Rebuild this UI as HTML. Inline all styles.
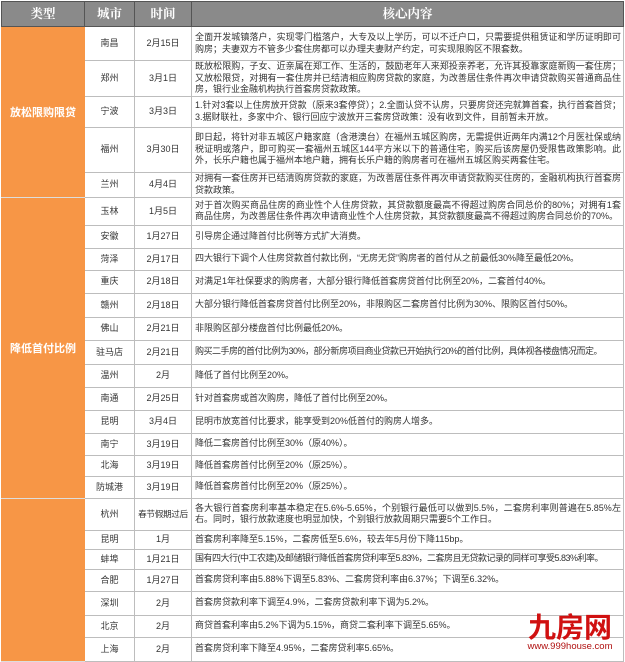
<!DOCTYPE html>
<html><head><meta charset="utf-8">
<style>
html,body{margin:0;padding:0;background:#fff;width:625px;height:662px;overflow:hidden}
table{position:absolute;left:1px;top:1px;border-collapse:collapse;table-layout:fixed;width:623px;font-family:"Liberation Sans","Noto Sans CJK SC",sans-serif;font-size:9px;color:#333}
td,th{border:1px solid #bdbdbd;padding:0;vertical-align:middle;overflow:hidden}
th{background:#8a8a8a;color:#fff;font-family:"Liberation Serif","Noto Serif CJK SC",serif;font-size:12.5px;font-weight:bold;border:1px solid #555;height:24px;line-height:14px}
td.t{background:#f79646;color:#fff;font-weight:bold;font-size:11px;text-align:center;border-color:#f79646;border-bottom:1px solid #ddd}
td.c{text-align:center;line-height:11px}
td.x{padding:0 2px 0 3px;line-height:11.5px;text-align:justify;word-break:break-all}
.logo{position:absolute;left:518px;top:611px;width:104px;text-align:center;color:#d01010}
.logo .b{font-family:"Noto Sans CJK SC",sans-serif;font-size:28px;line-height:30px;font-weight:bold}
.logo .s{font-family:"Liberation Sans",sans-serif;font-size:9.5px;line-height:11px;color:#b01010}
</style></head><body>
<table>
<colgroup><col style="width:83px"><col style="width:50px"><col style="width:57px"><col></colgroup>
<tr><th>类型</th><th>城市</th><th>时间</th><th>核心内容</th></tr>
<tr style="height:34px"><td class="t" rowspan="5">放松限购限贷</td><td class="c">南昌</td><td class="c">2月15日</td><td class="x">全面开发城镇落户，实现零门槛落户，大专及以上学历，可以不迁户口，只需要提供租赁证和学历证明即可购房；夫妻双方不管多少套住房都可以办理夫妻财产约定，可实现限购区不限套数。</td></tr>
<tr style="height:35px"><td class="c">郑州</td><td class="c">3月1日</td><td class="x">既放松限购，子女、近亲属在郑工作、生活的，鼓励老年人来郑投亲养老，允许其投靠家庭新购一套住房；又放松限贷，对拥有一套住房并已结清相应购房贷款的家庭，为改善居住条件再次申请贷款购买普通商品住房，银行业金融机构执行首套房贷款政策。</td></tr>
<tr style="height:31px"><td class="c">宁波</td><td class="c">3月3日</td><td class="x">1.针对3套以上住房放开贷款（原来3套停贷）；2.全面认贷不认房，只要房贷还完就算首套，执行首套首贷；3.据财联社，多家中介、银行回应宁波放开三套房贷政策：没有收到文件，目前暂未开放。</td></tr>
<tr style="height:45px"><td class="c">福州</td><td class="c">3月30日</td><td class="x">即日起，将针对非五城区户籍家庭（含港澳台）在福州五城区购房，无需提供近两年内满12个月医社保或纳税证明或落户，即可购买一套福州五城区144平方米以下的普通住宅，购买后该房屋仍受限售政策影响。此外，长乐户籍也属于福州本地户籍，拥有长乐户籍的购房者可在福州五城区购买两套住宅。</td></tr>
<tr style="height:25px"><td class="c">兰州</td><td class="c">4月4日</td><td class="x">对拥有一套住房并已结清购房贷款的家庭，为改善居住条件再次申请贷款购买住房的，金融机构执行首套房贷款政策。</td></tr>
<tr style="height:28px"><td class="t" rowspan="13">降低首付比例</td><td class="c">玉林</td><td class="c">1月5日</td><td class="x">对于首次购买商品住房的商业性个人住房贷款，其贷款额度最高不得超过购房合同总价的80%；对拥有1套商品住房，为改善居住条件再次申请商业性个人住房贷款，其贷款额度最高不得超过购房合同总价的70%。</td></tr>
<tr style="height:23px"><td class="c">安徽</td><td class="c">1月27日</td><td class="x">引导房企通过降首付比例等方式扩大消费。</td></tr>
<tr style="height:22px"><td class="c">菏泽</td><td class="c">2月17日</td><td class="x">四大银行下调个人住房贷款首付款比例，“无房无贷”购房者的首付从之前最低30%降至最低20%。</td></tr>
<tr style="height:23px"><td class="c">重庆</td><td class="c">2月18日</td><td class="x">对满足1年社保要求的购房者，大部分银行降低首套房贷首付比例至20%，二套首付40%。</td></tr>
<tr style="height:24px"><td class="c">赣州</td><td class="c">2月18日</td><td class="x">大部分银行降低首套房贷首付比例至20%，非限购区二套房首付比例为30%、限购区首付50%。</td></tr>
<tr style="height:23px"><td class="c">佛山</td><td class="c">2月21日</td><td class="x">非限购区部分楼盘首付比例最低20%。</td></tr>
<tr style="height:24px"><td class="c">驻马店</td><td class="c">2月21日</td><td class="x" style="letter-spacing:-0.5px">购买二手房的首付比例为30%，部分新房项目商业贷款已开始执行20%的首付比例，具体视各楼盘情况而定。</td></tr>
<tr style="height:23px"><td class="c">温州</td><td class="c">2月</td><td class="x">降低了首付比例至20%。</td></tr>
<tr style="height:23px"><td class="c">南通</td><td class="c">2月25日</td><td class="x">针对首套房或首次购房，降低了首付比例至20%。</td></tr>
<tr style="height:23px"><td class="c">昆明</td><td class="c">3月4日</td><td class="x">昆明市放宽首付比要求，能享受到20%低首付的购房人增多。</td></tr>
<tr style="height:22px"><td class="c">南宁</td><td class="c">3月19日</td><td class="x">降低二套房首付比例至30%（原40%）。</td></tr>
<tr style="height:21px"><td class="c">北海</td><td class="c">3月19日</td><td class="x">降低首套房首付比例至20%（原25%）。</td></tr>
<tr style="height:22px"><td class="c">防城港</td><td class="c">3月19日</td><td class="x">降低首套房首付比例至20%（原25%）。</td></tr>
<tr style="height:32px"><td class="t" rowspan="7"></td><td class="c">杭州</td><td class="c" style="font-size:8.6px;letter-spacing:-0.3px">春节假期过后</td><td class="x">各大银行首套房利率基本稳定在5.6%-5.65%，个别银行最低可以做到5.5%，二套房利率则普遍在5.85%左右。同时，银行放款速度也明显加快，个别银行放款周期只需要5个工作日。</td></tr>
<tr style="height:19px"><td class="c">昆明</td><td class="c">1月</td><td class="x">首套房利率降至5.15%，二套房低至5.6%，较去年5月份下降115bp。</td></tr>
<tr style="height:20px"><td class="c">蚌埠</td><td class="c">1月21日</td><td class="x" style="letter-spacing:-0.5px">国有四大行(中工农建)及邮储银行降低首套房贷利率至5.83%，二套房且无贷款记录的同样可享受5.83%利率。</td></tr>
<tr style="height:22px"><td class="c">合肥</td><td class="c">1月27日</td><td class="x">首套房贷利率由5.88%下调至5.83%、二套房贷利率由6.37%；下调至6.32%。</td></tr>
<tr style="height:24px"><td class="c">深圳</td><td class="c">2月</td><td class="x">首套房贷款利率下调至4.9%，二套房贷款利率下调为5.2%。</td></tr>
<tr style="height:22px"><td class="c">北京</td><td class="c">2月</td><td class="x">商贷首套利率由5.2%下调为5.15%，商贷二套利率下调至5.65%。</td></tr>
<tr style="height:24px"><td class="c">上海</td><td class="c">2月</td><td class="x">首套房贷利率下降至4.95%，二套房贷利率5.65%。</td></tr>
</table>
<div class="logo"><div class="b">九房网</div><div class="s">www.999house.com</div></div>
</body></html>
